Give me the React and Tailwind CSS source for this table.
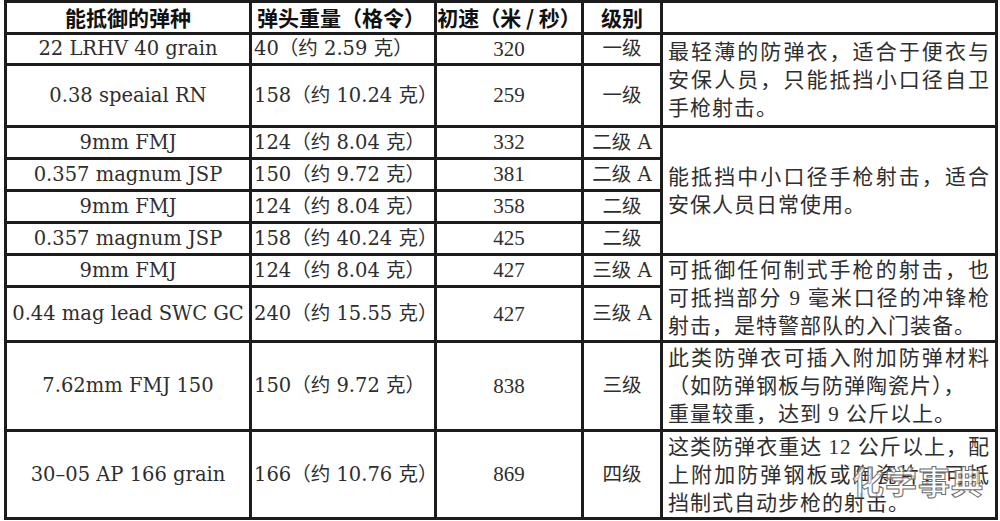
import React from 'react';

const rows = [
  { ammo: '22 LRHV 40 grain', weight: '40（约 2.59 克）', speed: '320', level: '一级', h: 'h-[31px]', desc: { span: 2, lines: ['最轻薄的防弹衣，适合于便衣与', '安保人员，只能抵挡小口径自卫', '手枪射击。'], full: 2 } },
  { ammo: '0.38 speaial RN', weight: '158（约 10.24 克）', speed: '259', level: '一级', h: 'h-[62px]' },
  { ammo: '9mm FMJ', weight: '124（约 8.04 克）', speed: '332', level: '二级 A', h: 'h-[32px]', desc: { span: 4, lines: ['能抵挡中小口径手枪射击，适合', '安保人员日常使用。'], full: 1 } },
  { ammo: '0.357 magnum JSP', weight: '150（约 9.72 克）', speed: '381', level: '二级 A', h: 'h-[32px]' },
  { ammo: '9mm FMJ', weight: '124（约 8.04 克）', speed: '358', level: '二级', h: 'h-[32px]' },
  { ammo: '0.357 magnum JSP', weight: '158（约 40.24 克）', speed: '425', level: '二级', h: 'h-[32px]' },
  { ammo: '9mm FMJ', weight: '124（约 8.04 克）', speed: '427', level: '三级 A', h: 'h-[32px]', desc: { span: 2, lines: ['可抵御任何制式手枪的射击，也', '可抵挡部分 9 毫米口径的冲锋枪', '射击，是特警部队的入门装备。'], full: 2 } },
  { ammo: '0.44 mag lead SWC GC', weight: '240（约 15.55 克）', speed: '427', level: '三级 A', h: 'h-[54px]' },
  { ammo: '7.62mm FMJ 150', weight: '150（约 9.72 克）', speed: '838', level: '三级', h: 'h-[89px]', desc: { span: 1, lines: ['此类防弹衣可插入附加防弹材料', '（如防弹钢板与防弹陶瓷片），', '重量较重，达到 9 公斤以上。'], full: 1 } },
  { ammo: '30–05 AP 166 grain', weight: '166（约 10.76 克）', speed: '869', level: '四级', h: 'h-[88px]', desc: { span: 1, lines: ['这类防弹衣重达 12 公斤以上，配', '上附加防弹钢板或陶瓷片，可抵', '挡制式自动步枪的射击。'], full: 2 } },
];

const cell = 'border-[3px] border-[#1c1c1c] p-0 align-middle';

export default function App() {
  return (
    <div className="relative w-[1000px] h-[521px] bg-white overflow-hidden pl-[4px]">
      <table className="table-fixed border-collapse w-[994px] text-[#2e2e2e] font-['DejaVu_Serif','Noto_Sans_CJK_SC',serif]">
        <colgroup>
          <col className="w-[245px]" />
          <col className="w-[185px]" />
          <col className="w-[147px]" />
          <col className="w-[79px]" />
          <col className="w-[335px]" />
        </colgroup>
        <thead>
          <tr className="h-[32px] font-['Noto_Sans_CJK_SC',sans-serif] font-bold text-[21px] text-[#111] leading-none">
            <th className={`${cell} text-center`}>能抵御的弹种</th>
            <th className={`${cell} text-left pl-[5px] whitespace-nowrap`}>弹头重量（格令）</th>
            <th className={`${cell} text-center whitespace-nowrap`}>初速（米 / 秒）</th>
            <th className={`${cell} text-center`}>级别</th>
            <th className={cell}></th>
          </tr>
        </thead>
        <tbody className="text-[19.5px] leading-none">
          {rows.map((r, i) => (
            <tr key={i} className={r.h}>
              <td className={`${cell} text-center whitespace-nowrap`}>{r.ammo}</td>
              <td className={`${cell} text-left pl-[2px] whitespace-nowrap`}>{r.weight}</td>
              <td className={`${cell} text-center font-['Liberation_Serif',serif] text-[21px]`}>{r.speed}</td>
              <td className={`${cell} text-center whitespace-nowrap`}>{r.level}</td>
              {r.desc && (
                <td rowSpan={r.desc.span} className={`${cell} pl-[5px] pr-[5px] font-['Liberation_Serif','Noto_Sans_CJK_SC',serif] text-[21px] tracking-[1px] leading-[28px] whitespace-nowrap`}>
                  {r.desc.lines.map((l, j) => (
                    <div key={j} className={j < r.desc.full ? 'text-justify [text-align-last:justify]' : ''}>{l}</div>
                  ))}
                </td>
              )}
            </tr>
          ))}
        </tbody>
      </table>
      <div className="absolute left-[852px] top-[464px] font-['Noto_Sans_CJK_SC',sans-serif] font-bold text-[32px] leading-none tracking-[1px] text-white/70 [-webkit-text-stroke:1px_#6b6b6b]">
        化学事典
      </div>
    </div>
  );
}
